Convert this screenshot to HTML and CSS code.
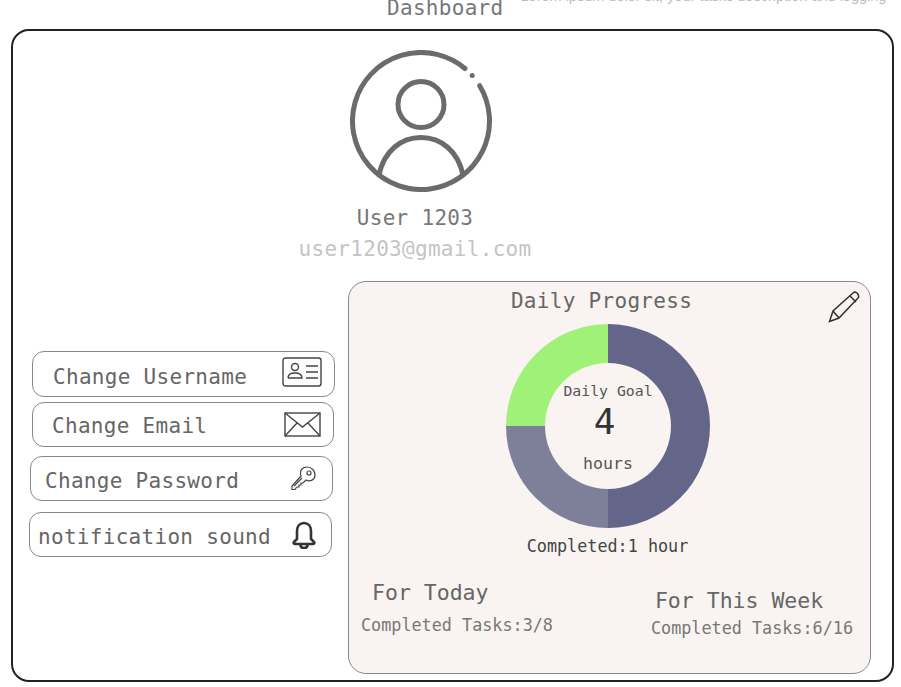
FILE: index.html
```html
<!DOCTYPE html>
<html lang="en">
<head>
<meta charset="UTF-8">
<title>Dashboard</title>
<link rel="stylesheet" href="styles.css">
</head>
<body>
	<div class="topbar">
		<div class="page-title">Dashboard</div>
		<div class="cut-text">Lorem ipsum dolor sit, your tasks description and logging</div>
	</div>
	<div class="frame">
		<div class="profile">
			<svg class="avatar" viewBox="0 0 142 142" fill="none" stroke="#6b6b6b" stroke-width="5" stroke-linecap="round">
				<path d="M115 18.500A68.500 68.500 0 1 0 129.700 35.700"/>
				<circle cx="122.200" cy="25.500" r="2.500" fill="#6b6b6b" stroke="none"/>
				<circle cx="71" cy="54.500" r="23"/>
				<path d="M29 125C34 101 51 87.500 71 87.500S108 101 113 125"/>
			</svg>
			<div class="user-name">User 1203</div>
			<div class="user-mail">user1203@gmail.com</div>
		</div>
		<div class="lower">
			<div class="menu">
				<div class="menu-row row-user">
					<span>Change Username</span>
					<svg class="icon" width="40" height="30" viewBox="0 0 40 30" fill="none" stroke="#444" stroke-width="1.400">
						<rect x="1" y="1" width="38" height="28" rx="2.500"/>
						<circle cx="13" cy="10" r="3.500"/>
						<path d="M6 21C6 17 9 16 13 16S20 17 20 21H6M24 9H36M24 15H36M24 21H36"/>
					</svg>
				</div>
				<div class="menu-row row-mail">
					<span>Change Email</span>
					<svg class="icon" width="37" height="25" viewBox="0 0 37 25" fill="none" stroke="#444" stroke-width="1.400">
						<rect x="1" y="1" width="35" height="23"/>
						<path d="M1 1L18.500 15L36 1M1 24L13 11M36 24L24 11"/>
					</svg>
				</div>
				<div class="menu-row row-pass">
					<span>Change Password</span>
					<svg class="icon" width="25" height="25" viewBox="0 0 25 25" fill="none" stroke="#444" stroke-width="1.200">
						<path d="M10 10C8 4 12 1 16 1C21 1 24 5 24 9C24 14 19 16 15 14L12 17H10V19H8V21H6L4 23.500H1V20L10 10Z"/>
						<circle cx="18" cy="7" r="2"/>
						<path d="M3 20L11 12"/>
					</svg>
				</div>
				<div class="menu-row row-bell">
					<span>notification sound</span>
					<svg class="icon" width="26" height="28" viewBox="0 0 26 28" fill="none" stroke="#333" stroke-width="2.600">
						<path d="M6 18V10C6 5 9 2 13 2S20 5 20 10V18L23 21C24 22 23 23 22 23H4C3 23 2 22 3 21L6 18Z"/>
						<path d="M9.500 24C9.500 26 11 27 13 27S16.500 26 16.500 24"/>
					</svg>
				</div>
			</div>
			<div class="panel">
				<div class="panel-title">Daily Progress</div>
				<svg class="pencil" width="32" height="32" viewBox="0 0 32 32" fill="none" stroke="#333" stroke-width="1.500">
					<path d="M1.500 30.500L5 20L25 2C26 1 28 1 29.500 2.500L30 3.500C31 5 31 6 30 7L11 27L1.500 30.500Z"/>
					<path d="M5 20L11 27M22 5L28 11"/>
				</svg>
				<div class="donut-wrap">
					<svg class="donut" viewBox="0 0 204 204">
						<path d="M102 0A102 102 0 0 1 102 204V165A63 63 0 0 0 102 39Z" fill="#636688"/>
						<path d="M102 204A102 102 0 0 1 0 102H39A63 63 0 0 0 102 165Z" fill="#7e8099"/>
						<path d="M0 102A102 102 0 0 1 102 0V39A63 63 0 0 0 39 102Z" fill="#a0f178"/>
					</svg>
					<div class="goal">
						<div class="goal-label">Daily Goal</div>
						<div class="goal-num">4</div>
						<div class="goal-unit">hours</div>
					</div>
				</div>
				<div class="completed">Completed:1 hour</div>
				<div class="stats">
					<div class="stat-today">
						<div class="stat-head">For Today</div>
						<div class="stat-line">Completed Tasks:3/8</div>
					</div>
					<div class="stat-week">
						<div class="stat-head">For This Week</div>
						<div class="stat-line">Completed Tasks:6/16</div>
					</div>
				</div>
			</div>
		</div>
	</div>
</body>
</html>
```

FILE: styles.css
```css
*{
	box-sizing:border-box;
}
html,body{
	margin:0;
	height:687px;
	overflow:hidden;
}
body{
	background:#fff;
	font-family:"DejaVu Sans Mono","Liberation Mono",monospace;
	color:#666;
}
.topbar{
	height:29px;
	display:flex;
	overflow:hidden;
	align-items:flex-start;
	padding-left:387px;
}
.page-title{
	font-size:21px;
	letter-spacing:0.3px;
	line-height:16px;
	color:#777;
}
.cut-text{
	font-family:"Liberation Sans",sans-serif;
	font-size:14.500px;
	line-height:12px;
	color:#bbb;
	margin:-10px 0 0 17px;
	white-space:nowrap;
}
.frame{
	width:883px;
	height:653px;
	margin-left:11px;
	border:2px solid #222;
	border-radius:18px;
	padding-top:19px;
}
.profile{
	width:300px;
	margin-left:252px;
	display:flex;
	flex-direction:column;
	align-items:center;
	text-align:center;
}
.avatar{
	width:142px;
	height:142px;
	margin-left:11px;
}
.user-name{
	font-size:21px;
	letter-spacing:0.3px;
	line-height:24px;
	margin-top:14px;
	color:#777;
}
.user-mail{
	font-size:21px;
	letter-spacing:0.3px;
	line-height:24px;
	margin-top:7px;
	color:#c4c4c4;
}
.lower{
	display:flex;
	margin-top:20px;
}
.menu{
	width:335px;
	padding-top:70px;
}
.menu-row{
	height:46px;
	border:1px solid #888;
	border-radius:12px;
	display:flex;
	align-items:center;
	justify-content:space-between;
	font-size:21px;
	letter-spacing:0.3px;
	color:#666;
	width:303px;
}
.row-user{
	margin-left:19px;
	padding:0 12px 4px 20px;
}
.row-user span{
	margin-top:10px;
}
.row-mail{
	margin:5px 0 0 19px;
	height:45px;
	width:302px;
	padding:0 12px 0 19px;
}
.row-mail span{
	margin-top:2px;
}
.row-pass{
	margin:9px 0 0 17px;
	height:45px;
	padding:0 16px 0 14px;
}
.row-pass span{
	margin-top:4px;
}
.row-bell{
	margin:11px 0 0 16px;
	height:45px;
	padding:0 14px 0 8px;
}
.row-bell span{
	margin-top:4px;
}
.panel{
	position:relative;
	width:523px;
	height:393px;
	border:1px solid #888;
	border-radius:18px;
	background:#f9f4f1;
	display:flex;
	flex-direction:column;
	align-items:center;
}
.panel-title{
	font-size:21px;
	letter-spacing:0.3px;
	line-height:24px;
	margin:7px 16px 0 0;
	color:#666;
}
.pencil{
	position:absolute;
	top:9px;
	right:10px;
}
.donut-wrap{
	position:relative;
	width:204px;
	height:204px;
	margin:11px 0 0 -3px;
}
.donut{
	width:204px;
	height:204px;
	display:block;
}
.goal{
	position:absolute;
	inset:39px;
	display:flex;
	flex-direction:column;
	align-items:center;
	color:#555;
}
.goal-label{
	font-size:14.800px;
	line-height:18px;
	margin-top:19px;
}
.goal-num{
	font-size:36px;
	line-height:40px;
	color:#333;
	margin:2px 0 0 -7px;
}
.goal-unit{
	font-size:16.600px;
	line-height:20px;
	margin-top:12px;
}
.completed{
	font-size:16.800px;
	line-height:20px;
	margin:8px 0 0 -4px;
	color:#444;
}
.stats{
	width:100%;
	display:flex;
	justify-content:space-between;
	align-items:flex-start;
	padding:0 17px 0 12px;
	margin-top:25px;
}
.stat-head{
	font-size:21.500px;
	line-height:24px;
	color:#666;
}
.stat-today .stat-head{
	margin-left:11px;
}
.stat-week{
	margin-top:8px;
}
.stat-week .stat-head{
	margin-left:4px;
}
.stat-line{
	font-size:16.800px;
	line-height:20px;
	margin-top:10px;
	color:#777;
}
.stat-week .stat-line{
	margin-top:5px;
}
```
